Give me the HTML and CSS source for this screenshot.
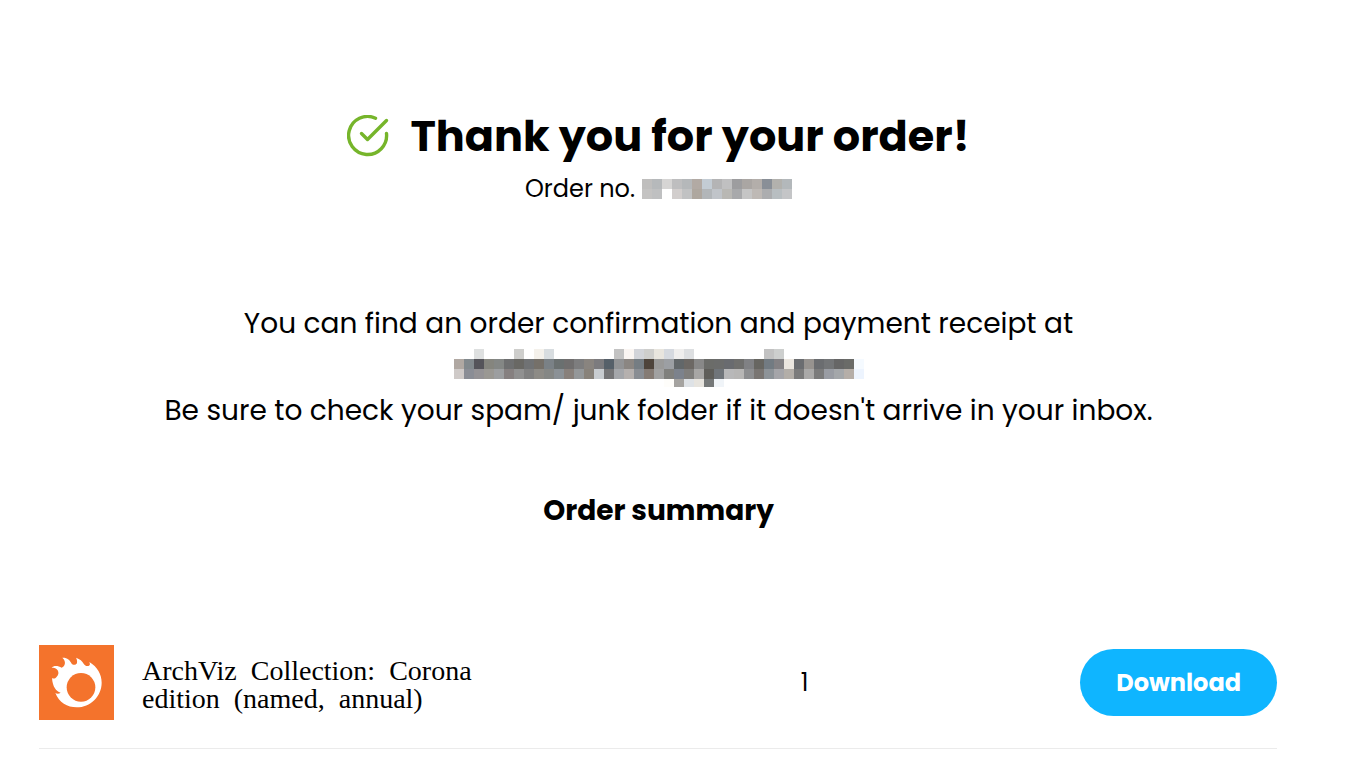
FILE: index.html
```html
<!DOCTYPE html>
<html lang="en">
<head>
    <meta charset="UTF-8">
    <meta name="viewport" content="width=device-width, initial-scale=1.0">
    <title>Thank you for your order!</title>
    <link rel="stylesheet" href="styles.css">
</head>
<body>
    <main class="container">
        <header class="order-header">
            <div class="title-row">
                <svg class="check-icon" viewBox="0 0 42 42" fill="none" stroke="#76b52b" stroke-width="3.4" stroke-linecap="round" stroke-linejoin="round" aria-hidden="true">
                    <path d="M28.5 3.2A19 19 0 1 0 39.5 18.5"/>
                    <path d="M14.5 18.5L20.5 24.5L39.5 5.5"/>
                </svg>
                <h1>Thank you for your order!</h1>
            </div>
            <p class="order-number">Order no. <svg class="masked" id="maskedNumber" role="img" aria-label="Hidden order number"></svg></p>
        </header>

        <section class="message">
            <p>You can find an order confirmation and payment receipt at</p>
            <p class="email"><svg class="masked" id="maskedEmail" role="img" aria-label="Hidden email address"></svg></p>
            <p>Be sure to check your spam/ junk folder if it doesn't arrive in your inbox.</p>
        </section>

        <section class="summary">
            <h2>Order summary</h2>
            <div class="order-item">
                <svg class="product-logo" viewBox="0 0 225 225" aria-hidden="true">
                    <rect width="225" height="225" fill="#f4732c"/>
                    <path fill="#fff" d="M38 69C43 61 57 62 68 68C78 64 83 49 70 38C84 37 93 45 98 56C104 62 112 60 114 54C115 49 114 43 111 38C123 42 130 48 134 56C138 63 145 65 150 62C154 60 153 56 151 51C175 65 188 88 188 113C188 154 154 187 113 187C85 187 60 172 49 144C53 147 60 147 65 143C51 138 41 126 39 99C43 102 49 101 52 97C59 90 60 83 56 76C52 70 45 67 38 69Z"/>
                    <circle cx="126" cy="127" r="43" fill="#f4732c"/>
                </svg>
                <p class="product-name">ArchViz&nbsp; Collection:&nbsp; Corona<br>edition&nbsp; (named,&nbsp; annual)</p>
                <span class="quantity">1</span>
                <button class="download-btn" type="button">Download</button>
            </div>
        </section>
    </main>

    <script>
        // Each row is a list of colours, "-" leaves the cell empty
        const numberRows = [
            'bfbebd b6b9bb d6d5d4 bebebf b5b8ba b2aaa4 c3ccd4 b4b4b5 c0c0c1 9d9d9f aaa6a3 b3aeaa 898f97 b2b1ad b3b8bb',
            'c4c3c2 bfc0c1 - d2cecd c1c2c3 aea79f b2b6b9 c0c4c9 b9b8b4 a8a9ab c5c5c5 beb9b5 acadaf b8bec1 c4c5c7'
        ];
        const emailRows = [
            '- - dee0e0 - - - cececc - f4f1eb d8dde0 - - - - - - c3c3c3 faf5f2 d2d4d9 cececc e8e5de d5d9df efeeed dddfe1 - - - - - - - c2c2c2 cdcfce',
            'b0a8a2 82898d 55545a 85857e 848785 6e6f70 696864 707274 757069 7a8186 6a7070 706e6e 7d7d7e 89847f 7c7b7e 566069 929395 8b8682 757d83 4e443b 9a9a99 9c9fa3 626769 6c6864 888888 6b6c69 6b6c6b 696b6f 6f6f6d 808184 676661 727b82 838184 ebe6df 6b6d70 97938f 6b6d70 737577 666666 6a6b68 f5faff',
            'cfcac8 8a8d95 949295 9a9893 9c9ea0 868080 909090 808080 8d8b86 858785 8b9196 88807b 949799 88827a c8ccd0 757577 a4a6aa b5b0ae 898d93 857b74 a1a1a1 80807d 7c828c 7f7e7c a7a6a5 5f5e5a 70757a b8b8b9 b7b6b5 8d8e90 797572 8d9398 a5a5a9 b3aea8 7b7b7b aaa9a8 7b7b7b 999ca3 a4a7aa b5aea8 edf4fe',
            '- - - - - - - - - - - - - - - - - - - - - fefdfa a5a3a0 dee2e6 e7e4de 757878 f0f4f8'
        ];

        function drawMask(id, rows, width, height) {
            const svg = document.getElementById(id);
            svg.setAttribute('width', width);
            svg.setAttribute('height', height);
            rows.forEach((row, y) => {
                row.split(' ').forEach((color, x) => {
                    if (color === '-') return;
                    const rect = document.createElementNS('http://www.w3.org/2000/svg', 'rect');
                    rect.setAttribute('x', x * 10);
                    rect.setAttribute('y', y * 10);
                    rect.setAttribute('width', 10);
                    rect.setAttribute('height', 10);
                    rect.setAttribute('fill', '#' + color);
                    svg.appendChild(rect);
                });
            });
        }

        drawMask('maskedNumber', numberRows, 150, 20);
        drawMask('maskedEmail', emailRows, 410, 38);
    </script>
</body>
</html>
```
FILE: styles.css
```css
* {
    margin: 0;
    padding: 0;
    box-sizing: border-box;
}

body {
    font-family: Poppins, Inter, sans-serif;
    color: #000;
    background-color: #fff;
}

.container {
    padding: 104px 80px 32px 39px;
}

.order-header {
    text-align: center;
}

.title-row {
    display: flex;
    justify-content: center;
    align-items: center;
    gap: 21px;
}

.check-icon {
    width: 42px;
    height: 42px;
    flex-shrink: 0;
}

h1 {
    font-size: 43px;
    font-weight: 700;
    line-height: 64px;
}

.order-number {
    display: flex;
    justify-content: center;
    align-items: center;
    gap: 7px;
    font-size: 24px;
    line-height: 42px;
}

.masked {
    display: block;
    flex-shrink: 0;
}

.message {
    margin-top: 92px;
    font-size: 28px;
    line-height: 43px;
    text-align: center;
}

.email {
    display: flex;
    justify-content: center;
    align-items: flex-end;
    height: 44px;
    padding-bottom: 2px;
}

.summary h2 {
    margin-top: 57px;
    font-size: 28px;
    font-weight: 700;
    line-height: 44px;
    text-align: center;
}

.order-item {
    display: grid;
    grid-template-columns: 75px 8fr 3fr 5fr;
    align-items: center;
    margin-top: 112px;
    margin-right: 1px;
    padding-bottom: 28px;
    border-bottom: 1px solid #ebebeb;
}

.product-logo {
    width: 75px;
    height: 75px;
}

.product-name {
    margin-left: 28px;
    padding-top: 4px;
    font-family: "Liberation Serif", "Times New Roman", serif;
    font-size: 28px;
    line-height: 28px;
    white-space: nowrap;
}

.quantity {
    font-size: 24px;
    text-align: center;
}

.download-btn {
    justify-self: end;
    padding: 0 36px;
    border: none;
    border-radius: 34px;
    background-color: #0fb5ff;
    color: #fff;
    font-family: inherit;
    font-size: 24px;
    font-weight: 700;
    line-height: 67px;
    cursor: pointer;
}
```
